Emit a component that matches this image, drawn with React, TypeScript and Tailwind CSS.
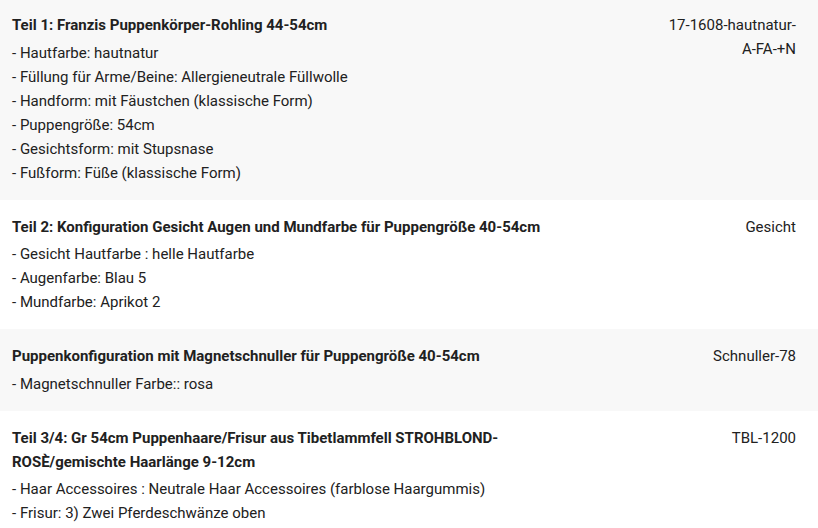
const rows = [
  {
    title: "Teil 1: Franzis Puppenkörper-Rohling 44-54cm",
    items: [
      "Hautfarbe: hautnatur",
      "Füllung für Arme/Beine: Allergieneutrale Füllwolle",
      "Handform: mit Fäustchen (klassische Form)",
      "Puppengröße: 54cm",
      "Gesichtsform: mit Stupsnase",
      "Fußform: Füße (klassische Form)",
    ],
    sku: "17-1608-hautnatur-A-FA-+N",
  },
  {
    title: "Teil 2: Konfiguration Gesicht Augen und Mundfarbe für Puppengröße 40-54cm",
    items: ["Gesicht Hautfarbe : helle Hautfarbe", "Augenfarbe: Blau 5", "Mundfarbe: Aprikot 2"],
    sku: "Gesicht",
  },
  {
    title: "Puppenkonfiguration mit Magnetschnuller für Puppengröße 40-54cm",
    items: ["Magnetschnuller Farbe:: rosa"],
    sku: "Schnuller-78",
  },
  {
    title: "Teil 3/4: Gr 54cm Puppenhaare/Frisur aus Tibetlammfell STROHBLOND-ROSÈ/gemischte Haarlänge 9-12cm",
    items: ["Haar Accessoires : Neutrale Haar Accessoires (farblose Haargummis)", "Frisur: 3) Zwei Pferdeschwänze oben"],
    sku: "TBL-1200",
  },
];

export default function App() {
  return (
    <div className="w-[818px] h-[528px] overflow-hidden bg-white text-[15px] leading-6 text-[#212121] font-['Roboto',sans-serif]">
      <div className="-mt-[2px]">
        {rows.map((row, i) => (
          <div
            key={i}
            className={`grid grid-cols-[minmax(0,1fr)_135px] gap-[60px] pl-3 pr-[22px] py-[15px] ${
              i % 2 === 0 ? "bg-[#f8f8f8]" : "bg-white"
            }`}
          >
            <div>
              <p className="font-bold mb-[3.5px]">{row.title}</p>
              {row.items.map((it) => (
                <p key={it}>- {it}</p>
              ))}
            </div>
            <div className="text-right break-words">{row.sku}</div>
          </div>
        ))}
      </div>
    </div>
  );
}
